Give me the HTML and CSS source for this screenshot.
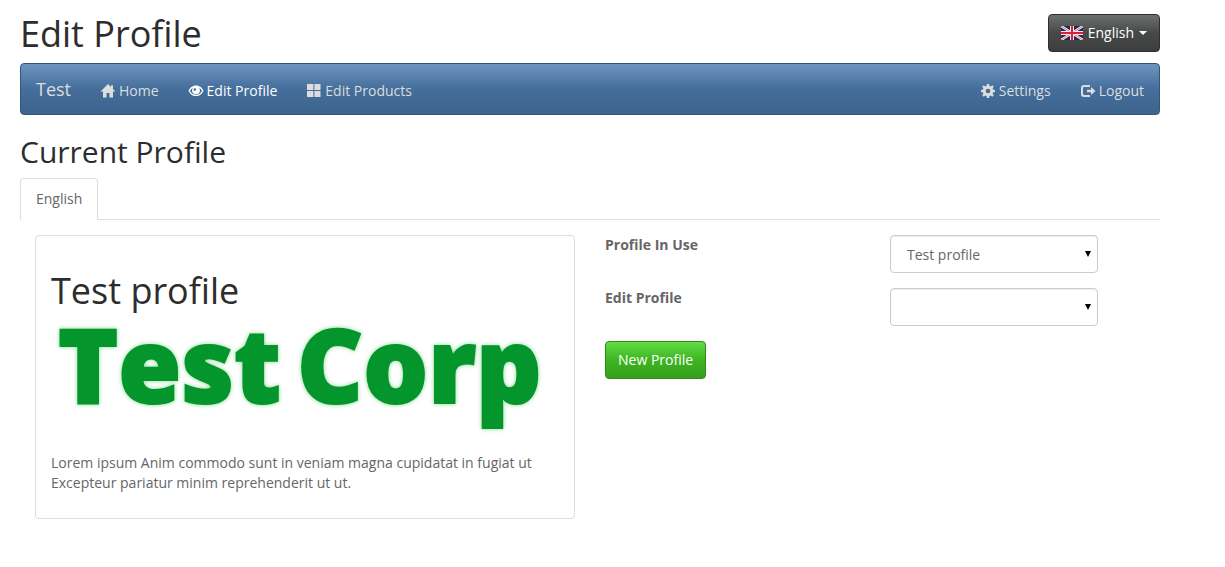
FILE: index.html
```html
<!DOCTYPE html>
<html lang="en">
<head>
    <meta charset="UTF-8">
    <meta name="viewport" content="width=device-width, initial-scale=1.0">
    <title>Edit Profile</title>
    <link rel="stylesheet" href="styles.css">
</head>
<body>
    <div class="container">
        <header class="page-header">
            <h1>Edit Profile</h1>
            <button type="button" class="btn btn-default">
                <svg class="flag" viewBox="0 0 22 14" aria-hidden="true">
                    <rect width="22" height="14" fill="#23264f"/>
                    <path d="M0 0L22 14M22 0L0 14" stroke="#f3e6f0" stroke-width="2.600"/>
                    <path d="M0 0L22 14M22 0L0 14" stroke="#d0506c" stroke-width="0.700"/>
                    <path d="M11 0V14M0 7H22" stroke="#f3e6f0" stroke-width="4"/>
                    <path d="M11 0V14M0 7H22" stroke="#d8203a" stroke-width="2"/>
                </svg>
                English
                <span class="caret"></span>
            </button>
        </header>

        <nav class="navbar">
            <a class="brand" href="#">Test</a>
            <ul class="nav">
                <li><a href="#">
                    <svg class="icon" viewBox="0 0 14 14" aria-hidden="true"><path d="M7 0L-0.500 7.400H2V13.500H5.500V9H8.500V13.500H12V7.400H14.500L12 5V1.200H10V3.100Z"/></svg>
                    Home</a></li>
                <li class="active"><a href="#">
                    <svg class="icon" viewBox="0 0 14 14" aria-hidden="true"><path fill-rule="evenodd" d="M7 1.500C3.200 1.500 0.800 4 -0.500 6.700C0.800 9.700 3.200 12 7 12S13.200 9.700 14.500 6.700C13.200 4 10.800 1.500 7 1.500ZM7 10.900C4.200 10.900 2.200 9.200 1 6.800C1.700 5.400 2.700 4.400 3.800 3.700C3.200 4.700 3 5.500 3 6.400C3 8.600 4.800 10.200 7 10.200S11 8.600 11 6.400C11 5.500 10.800 4.700 10.200 3.700C11.300 4.400 12.300 5.400 13 6.800C11.800 9.200 9.800 10.900 7 10.900ZM5.200 4.200C6.400 3.900 7.300 4.700 7.100 5.700C6.800 6.800 5.500 7.100 4.600 6.500C4.400 5.600 4.700 4.700 5.200 4.200Z"/></svg>
                    Edit Profile</a></li>
                <li><a href="#">
                    <svg class="icon" viewBox="0 0 14 14" aria-hidden="true"><path d="M0 0H6.400V6H0ZM7.400 0H13.500V6H7.400ZM0 7H6.400V13H0ZM7.400 7H13.500V13H7.400Z"/></svg>
                    Edit Products</a></li>
            </ul>
            <ul class="nav nav-right">
                <li><a href="#">
                    <svg class="icon" viewBox="0 0 14 14" aria-hidden="true"><path fill-rule="evenodd" d="M5.900 0H8.100L8.500 2L9.800 2.500L11.400 1.300L12.800 2.700L11.600 4.300L12.100 5.500L14 5.900V8.100L12.100 8.500L11.600 9.700L12.800 11.300L11.400 12.800L9.700 11.600L8.500 12.100L8.100 14H5.900L5.500 12.100L4.300 11.600L2.700 12.800L1.200 11.300L2.400 9.700L1.900 8.500L0 8.100V5.900L1.900 5.500L2.400 4.300L1.200 2.700L2.700 1.300L4.300 2.500L5.500 2ZM7 4.700A2.300 2.300 0 1 0 7 9.300A2.300 2.300 0 1 0 7 4.700Z"/></svg>
                    Settings</a></li>
                <li><a href="#">
                    <svg class="icon" viewBox="0 0 14 14" aria-hidden="true"><path d="M9 1H3C1 1 0 2 0 4V10C0 12 1 13 3 13H9V11H3.400C2.500 11 2 10.500 2 9.600V4.400C2 3.500 2.500 3 3.400 3H9Z"/><path d="M10 3L14.500 7L10 11V8.300H6V5.700H10Z"/></svg>
                    Logout</a></li>
            </ul>
        </nav>

        <h2>Current Profile</h2>

        <ul class="tabs">
            <li><a href="#profile-en">English</a></li>
        </ul>

        <div class="row" id="profile-en">
            <div class="panel">
                <h1>Test profile</h1>
                <svg class="logo" viewBox="0 0 508 122" role="img" aria-label="Test Corp">
                    <text x="7" y="82">Test</text>
                    <text x="246" y="82">Corp</text>
                </svg>
                <p>Lorem ipsum Anim commodo sunt in veniam magna cupidatat in fugiat ut Excepteur pariatur minim reprehenderit ut ut.</p>
            </div>

            <form class="profile-form">
                <div class="form-group">
                    <label for="profileInUse">Profile In Use</label>
                    <div class="select-wrap">
                        <select id="profileInUse" name="profile_in_use">
                            <option value="1" selected>Test profile</option>
                        </select>
                    </div>
                </div>
                <div class="form-group">
                    <label for="editProfile">Edit Profile</label>
                    <div class="select-wrap">
                        <select id="editProfile" name="edit_profile">
                            <option value="" selected></option>
                            <option value="1">Test profile</option>
                        </select>
                    </div>
                </div>
                <button type="button" class="btn btn-success">New Profile</button>
            </form>
        </div>
    </div>
</body>
</html>
```

FILE: styles.css
```css
* {
    box-sizing: border-box;
}
body {
    margin: 0;
    font-family: 'Open Sans', 'Liberation Sans', sans-serif;
    font-size: 14px;
    line-height: 20px;
    color: #666;
    background-color: #fff;
}
.container {
    max-width: 1180px;
    padding: 14px 20px 20px;
}
h1, h2 {
    margin: 0;
    font-weight: 400;
    color: #2d2d2d;
}
h1 {
    font-size: 36px;
    line-height: 40px;
}
h2 {
    margin: 20px 0 10px;
    font-size: 30px;
    line-height: 33px;
}
a {
    text-decoration: none;
}
ul {
    list-style: none;
    margin: 0;
    padding: 0;
}

/* header */
.page-header {
    display: flex;
    justify-content: space-between;
    align-items: flex-start;
    margin-bottom: 9px;
}
.btn {
    display: inline-flex;
    align-items: center;
    gap: 5px;
    padding: 8px 12px;
    border: 1px solid;
    border-radius: 4px;
    font-family: inherit;
    font-size: 14px;
    line-height: 20px;
    color: #fff;
    cursor: pointer;
}
.btn-default {
    border-color: #2e2f2f;
    background: linear-gradient(#6d7070, #474949 50%, #3d3f3f);
}
.btn-success {
    border-color: #2e8a19;
    background: linear-gradient(#61dd45, #3cb521 50%, #36a01d);
}
.flag {
    width: 22px;
    height: 14px;
}
.caret {
    border-top: 4px solid;
    border-left: 4px solid transparent;
    border-right: 4px solid transparent;
}

/* navbar */
.navbar {
    display: flex;
    flex-wrap: wrap;
    border: 1px solid #345578;
    border-radius: 4px;
    background: linear-gradient(#6d94bf, #446e9b 50%, #3e648d);
}
.navbar a {
    display: flex;
    align-items: center;
    gap: 4px;
    padding: 17px 15px 13px;
    color: #ddd;
}
.navbar .brand {
    padding: 15px;
    font-size: 18px;
}
.navbar a:hover,
.navbar .active a {
    color: #fff;
}
.nav {
    display: flex;
    flex-wrap: wrap;
}
.nav-right {
    margin-left: auto;
}
.icon {
    width: 14px;
    height: 14px;
    fill: currentColor;
    overflow: visible;
}

/* tabs */
.tabs {
    display: flex;
    border-bottom: 1px solid #ddd;
}
.tabs li {
    margin-bottom: -1px;
}
.tabs a {
    display: block;
    padding: 10px 15px;
    border: 1px solid #ddd;
    border-bottom-color: #fff;
    border-radius: 4px 4px 0 0;
    background: #fff;
    color: #666;
}

/* profile */
.row {
    display: grid;
    grid-template-columns: 1fr 1fr;
    gap: 30px;
    align-items: start;
    padding: 15px;
}
.panel {
    padding: 15px;
    border: 1px solid #ddd;
    border-radius: 4px;
}
.panel h1 {
    margin: 20px 0 10px;
}
.panel p {
    margin: 10px 0;
}
.logo {
    display: block;
    width: 100%;
    overflow: visible;
    fill: #04962c;
    stroke: #04962c;
    stroke-width: 2px;
    font-family: 'Open Sans', 'Liberation Sans', sans-serif;
    font-size: 102px;
    font-weight: 800;
    filter: drop-shadow(0 0 2px #7fd68c);
}
.form-group {
    display: grid;
    grid-template-columns: 1fr 1fr;
    gap: 30px;
    margin-bottom: 15px;
}
.form-group label {
    font-weight: 700;
}
.select-wrap {
    position: relative;
    max-width: 208px;
}
.select-wrap::after {
    content: "";
    position: absolute;
    top: 16px;
    right: 7px;
    border-top: 6px solid #000;
    border-left: 3px solid transparent;
    border-right: 3px solid transparent;
    pointer-events: none;
}
select {
    display: block;
    width: 100%;
    height: 38px;
    padding: 8px 16px;
    border: 1px solid #ccc;
    border-radius: 4px;
    background: #fff;
    box-shadow: inset 0 1px 1px rgba(0, 0, 0, 0.075);
    font-family: inherit;
    font-size: 14px;
    color: #666;
    appearance: none;
}

@media (max-width: 767px) {
    .row {
        grid-template-columns: 1fr;
    }
}
```
